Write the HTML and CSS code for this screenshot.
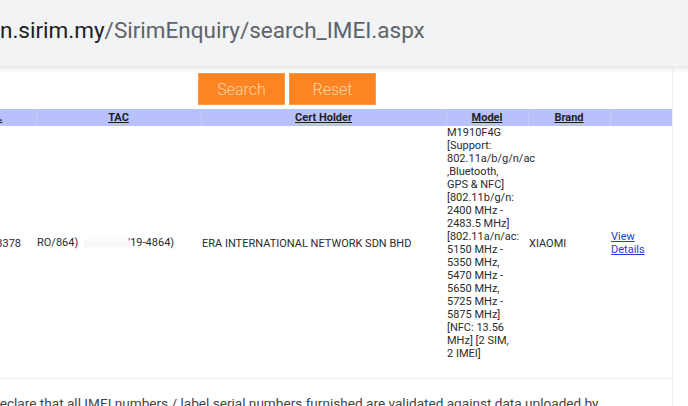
FILE: index.html
```html
<!DOCTYPE html>
<html>
<head>
<meta charset="utf-8">
<link rel="stylesheet" href="styles.css">
</head>
<body>
<div class="addressbar">
  <div class="url"><span class="host">n.sirim.my</span><span class="path">/SirimEnquiry/search_IMEI.aspx</span></div>
</div>
<div class="page">
  <div class="content">
    <div class="buttons">
      <button class="btn">Search</button>
      <button class="btn">Reset</button>
    </div>
    <div class="tablewrap">
      <table class="grid">
        <colgroup>
          <col class="c1"><col class="c2"><col class="c3"><col class="c4"><col class="c5"><col class="c6">
        </colgroup>
        <thead>
          <tr>
            <th><a>No.</a></th>
            <th><a>TAC</a></th>
            <th><a>Cert Holder</a></th>
            <th><a>Model</a></th>
            <th><a>Brand</a></th>
            <th></th>
          </tr>
        </thead>
        <tbody>
          <tr>
            <td class="num">3378</td>
            <td>RO/864)<span class="blur"></span>'19-4864)</td>
            <td>ERA INTERNATIONAL NETWORK SDN BHD</td>
            <td class="model">M1910F4G<br>[Support:<br>802.11a/b/g/n/ac<br>,Bluetooth,<br>GPS &amp; NFC]<br>[802.11b/g/n:<br>2400 MHz -<br>2483.5 MHz]<br>[802.11a/n/ac:<br>5150 MHz -<br>5350 MHz,<br>5470 MHz -<br>5650 MHz,<br>5725 MHz -<br>5875 MHz]<br>[NFC: 13.56<br>MHz] [2 SIM,<br>2 IMEI]</td>
            <td>XIAOMI</td>
            <td><a class="link" href="#">View Details</a></td>
          </tr>
        </tbody>
      </table>
    </div>
    <p class="declare">I declare that all IMEI numbers / label serial numbers furnished are validated against data uploaded by SIRIM QAS International.</p>
  </div>
</div>
</body>
</html>
```

FILE: styles.css
```css
html, body {
  margin: 0;
  padding: 0;
  background: #ffffff;
  font-family: Roboto, "Liberation Sans", Arial, sans-serif;
  overflow: hidden;
  width: 688px;
  height: 406px;
}

.addressbar {
  height: 66px;
  background: #f1f3f4;
  display: flex;
  align-items: center;
  overflow: hidden;
}

.url {
  font-size: 22.5px;
  white-space: nowrap;
  margin-top: -7px;
}

.host { color: #202124; }
.path { color: #5f6368; }

.page {
  background: linear-gradient(#e9e9e9, #ffffff 7px);
  height: 340px;
  overflow: hidden;
}

.content {
  width: 672px;
  height: 340px;
  border-right: 1px solid #ececec;
  overflow: hidden;
}

.buttons {
  display: flex;
  gap: 4px;
  padding: 7px 0 0 198px;
  height: 32px;
}

.btn {
  width: 87px;
  height: 32px;
  margin: 0;
  border: 1px solid #ff9a46;
  background: #fd8422;
  color: #ffd3a6;
  font-family: Roboto, "Liberation Sans", Arial, sans-serif;
  font-weight: 300;
  font-size: 16px;
  padding: 0;
}

.tablewrap {
  margin-top: 4px;
  overflow: hidden;
}

.grid {
  border-collapse: collapse;
  table-layout: fixed;
  width: 720px;
  margin-left: -48px;
  font-size: 11px;
  color: #2b2b2b;
}

.c1 { width: 84px; }
.c2 { width: 165px; }
.c3 { width: 245px; }
.c4 { width: 82px; }
.c5 { width: 82px; }
.c6 { width: 62px; }

.grid th {
  background: #b8c1fc;
  height: 17px;
  padding: 0;
  font-weight: bold;
  text-align: center;
  border-left: 1px solid #c6cdfc;
  line-height: 17px;
}

.grid th:first-child { border-left: none; }

.grid th a {
  color: #1f1f1f;
  text-decoration: underline;
}

.grid td {
  padding: 0 1px 18px;
  line-height: 13px;
  vertical-align: middle;
  border-bottom: 1px solid #ececec;
  white-space: nowrap;
}

.grid td.model { white-space: normal; }

.grid td.num {
  text-align: right;
  padding-right: 15px;
}

.blur {
  display: inline-block;
  width: 44px;
  height: 14px;
  margin: 0 0 0 6px;
  vertical-align: middle;
  background: linear-gradient(#ffffff, #f6f6f6 60%, #ffffff);
}

.link {
  color: #2440d4;
  text-decoration: underline;
  white-space: normal;
  display: inline-block;
  width: 40px;
}

.declare {
  width: 640px;
  margin: 15px 0 0 -15px;
  font-size: 13.6px;
  line-height: 18px;
  color: #444444;
}
```
